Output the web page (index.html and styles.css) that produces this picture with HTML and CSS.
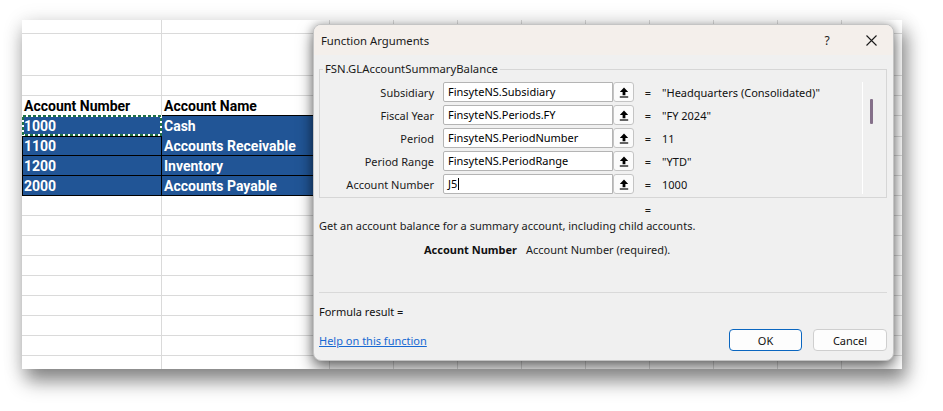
FILE: index.html
```html
<!DOCTYPE html>
<html>
<head>
<meta charset="utf-8">
<link rel="stylesheet" href="styles.css">
</head>
<body>
<div class="stage">
  <div class="sheet">
    <div class="grid">
      <div class="row r-top"><div class="cell a"></div><div class="cell b"></div><div class="cell rest"></div></div>
      <div class="row r-tall"><div class="cell a"></div><div class="cell b"></div><div class="cell rest"></div></div>
      <div class="row"><div class="cell a"></div><div class="cell b"></div><div class="cell rest"></div></div>
      <div class="row head"><div class="cell a">Account Number</div><div class="cell b">Account Name</div><div class="cell rest"></div></div>
      <div class="row data"><div class="cell a ants">1000<svg class="ants-svg" viewBox="0 0 140 21" preserveAspectRatio="none"><rect x="1" y="1" width="138" height="19" fill="none" stroke="#ffffff" stroke-width="2"/><rect x="1" y="1" width="138" height="19" fill="none" stroke="#1e7145" stroke-width="2" stroke-dasharray="3 2"/></svg></div><div class="cell b">Cash</div><div class="cell rest"></div></div>
      <div class="row data"><div class="cell a">1100</div><div class="cell b">Accounts Receivable</div><div class="cell rest"></div></div>
      <div class="row data"><div class="cell a">1200</div><div class="cell b">Inventory</div><div class="cell rest"></div></div>
      <div class="row data"><div class="cell a">2000</div><div class="cell b">Accounts Payable</div><div class="cell rest"></div></div>
      <div class="row"><div class="cell a"></div><div class="cell b"></div><div class="cell rest"></div></div>
      <div class="row"><div class="cell a"></div><div class="cell b"></div><div class="cell rest"></div></div>
      <div class="row"><div class="cell a"></div><div class="cell b"></div><div class="cell rest"></div></div>
      <div class="row"><div class="cell a"></div><div class="cell b"></div><div class="cell rest"></div></div>
      <div class="row"><div class="cell a"></div><div class="cell b"></div><div class="cell rest"></div></div>
      <div class="row"><div class="cell a"></div><div class="cell b"></div><div class="cell rest"></div></div>
      <div class="row"><div class="cell a"></div><div class="cell b"></div><div class="cell rest"></div></div>
      <div class="row"><div class="cell a"></div><div class="cell b"></div><div class="cell rest"></div></div>
      <div class="row"><div class="cell a"></div><div class="cell b"></div><div class="cell rest"></div></div>
    </div>

    <div class="dialog">
      <div class="titlebar">
        <span class="title">Function Arguments</span>
        <span class="help">?</span>
        <span class="close"><svg width="11" height="11" viewBox="0 0 11 11"><path d="M0.5 0.5 L10.5 10.5 M10.5 0.5 L0.5 10.5" stroke="#1a1a1a" stroke-width="1.1" fill="none"/></svg></span>
      </div>
      <div class="body">
        <fieldset class="group">
          <legend>FSN.GLAccountSummaryBalance</legend>
          <div class="scrollarea">
            <div class="args">
              <div class="arg"><span class="lbl">Subsidiary</span><span class="inp">FinsyteNS.Subsidiary</span><span class="pick"><svg width="10" height="11" viewBox="0 0 10 11"><path d="M5 0.5 L9.2 5 H6.4 V8.3 H3.6 V5 H0.8 Z" fill="#000"/><rect x="0.8" y="9.4" width="8.4" height="1.2" fill="#000"/></svg></span><span class="eq">=</span><span class="val">"Headquarters (Consolidated)"</span></div>
              <div class="arg"><span class="lbl">Fiscal Year</span><span class="inp">FinsyteNS.Periods.FY</span><span class="pick"><svg width="10" height="11" viewBox="0 0 10 11"><path d="M5 0.5 L9.2 5 H6.4 V8.3 H3.6 V5 H0.8 Z" fill="#000"/><rect x="0.8" y="9.4" width="8.4" height="1.2" fill="#000"/></svg></span><span class="eq">=</span><span class="val">"FY 2024"</span></div>
              <div class="arg"><span class="lbl">Period</span><span class="inp">FinsyteNS.PeriodNumber</span><span class="pick"><svg width="10" height="11" viewBox="0 0 10 11"><path d="M5 0.5 L9.2 5 H6.4 V8.3 H3.6 V5 H0.8 Z" fill="#000"/><rect x="0.8" y="9.4" width="8.4" height="1.2" fill="#000"/></svg></span><span class="eq">=</span><span class="val">11</span></div>
              <div class="arg"><span class="lbl">Period Range</span><span class="inp">FinsyteNS.PeriodRange</span><span class="pick"><svg width="10" height="11" viewBox="0 0 10 11"><path d="M5 0.5 L9.2 5 H6.4 V8.3 H3.6 V5 H0.8 Z" fill="#000"/><rect x="0.8" y="9.4" width="8.4" height="1.2" fill="#000"/></svg></span><span class="eq">=</span><span class="val">"YTD"</span></div>
              <div class="arg"><span class="lbl">Account Number</span><span class="inp">J5<span class="caret"></span></span><span class="pick"><svg width="10" height="11" viewBox="0 0 10 11"><path d="M5 0.5 L9.2 5 H6.4 V8.3 H3.6 V5 H0.8 Z" fill="#000"/><rect x="0.8" y="9.4" width="8.4" height="1.2" fill="#000"/></svg></span><span class="eq">=</span><span class="val">1000</span></div>
            </div>
            <div class="vline"></div>
            <div class="track"><div class="thumb"></div></div>
          </div>
        </fieldset>
        <div class="result-eq"><span class="eq">=</span></div>
        <div class="desc">Get an account balance for a summary account, including child accounts.</div>
        <div class="param"><span class="pname">Account Number</span><span class="pdesc">Account Number (required).</span></div>
        <div class="sep"></div>
        <div class="formula">Formula result =</div>
        <div class="footer">
          <a class="link" href="#">Help on this function</a>
          <span class="btn ok">OK</span>
          <span class="btn cancel">Cancel</span>
        </div>
      </div>
    </div>
  </div>
</div>
</body>
</html>
```
FILE: styles.css
```css
html, body {
  margin: 0;
  padding: 0;
  background: #ffffff;
}

.stage {
  padding: 20px 0 40px 22px;
}

.sheet {
  position: relative;
  width: 880px;
  height: 349px;
  overflow: hidden;
  background: #ffffff;
  box-shadow: 4px 12px 18px rgba(0, 0, 0, 0.45), 0 2px 20px rgba(0, 0, 0, 0.12);
}

.grid {
  display: flex;
  flex-direction: column;
  font-family: Roboto, "Liberation Sans", sans-serif;
  font-size: 14px;
  font-weight: 700;
  color: #000;
}

.row {
  display: grid;
  grid-template-columns: 140px 168px 1fr;
  height: 20px;
  flex: none;
}

.row.r-top { height: 14px; }
.row.r-tall { height: 42px; }

.cell {
  box-sizing: border-box;
  border-bottom: 1px solid #dadada;
  line-height: 20px;
  padding-left: 2px;
  white-space: nowrap;
  overflow: hidden;
}

.cell.a { border-right: 1px solid #dadada; }
.cell.b { border-right: 1px solid #dadada; }

.row.r-top .cell, .row.r-tall .cell { line-height: normal; }

.cell.rest {
  padding: 0;
  background-image: repeating-linear-gradient(to right, transparent 0, transparent 63px, #dadada 63px, #dadada 64px);
}

.row.head .cell.a,
.row.head .cell.b {
  border-bottom-color: #000;
  line-height: 19px;
  padding-top: 1px;
}

.row.data .cell.a,
.row.data .cell.b {
  background: #215596;
  color: #ffffff;
  border-bottom: 1px solid #000;
  line-height: 19px;
  padding-top: 1px;
}

.row.data .cell.a {
  border-left: 1px solid #000;
  border-right: 1px solid #000;
  padding-left: 1px;
}

.cell.ants {
  position: relative;
  overflow: visible;
}

.ants-svg {
  position: absolute;
  left: -1px;
  top: -1px;
  width: 140px;
  height: 21px;
}

/* Dialog */
.dialog {
  position: absolute;
  left: 291px;
  top: 4px;
  width: 581px;
  height: 337px;
  box-sizing: border-box;
  border: 1px solid #c4c4c4;
  border-radius: 8px;
  background: #f0f0f0;
  box-shadow: 0 8px 16px rgba(0, 0, 0, 0.5), 0 0 10px rgba(0, 0, 0, 0.28);
  overflow: hidden;
  display: flex;
  flex-direction: column;
  font-family: "Noto Sans", "Open Sans", sans-serif;
  font-size: 11px;
  color: #111111;
}

.titlebar {
  height: 30px;
  flex: none;
  background: #f4efeb;
  display: flex;
  align-items: center;
  padding-left: 7px;
}

.title {
  font-size: 11.3px;
  color: #1a1a1a;
}

.help {
  margin-left: auto;
  width: 20px;
  text-align: center;
  font-size: 12px;
  color: #1a1a1a;
}

.close {
  width: 44px;
  margin-left: 12px;
  display: flex;
  justify-content: center;
  align-items: center;
}

.body {
  padding: 6px 6px 0 5px;
  display: flex;
  flex-direction: column;
}

.group {
  margin: 0;
  width: 568px;
  box-sizing: border-box;
  border: 1px solid #d6d6d6;
  padding: 5px 0 3px 0;
  min-width: 0;
}

.group legend {
  margin-left: 3px;
  padding: 0 2px;
  line-height: 16px;
  font-size: 11.3px;
  color: #1a1a1a;
}

.scrollarea {
  display: flex;
  align-items: stretch;
}

.args {
  width: 542px;
  display: flex;
  flex-direction: column;
  gap: 3px;
}

.arg {
  display: flex;
  align-items: center;
  height: 20px;
}

.lbl {
  width: 114px;
  text-align: right;
  margin-right: 9px;
  color: #1a1a1a;
  flex: none;
}

.inp {
  width: 170px;
  height: 20px;
  box-sizing: border-box;
  border: 1px solid #b4b4b4;
  border-radius: 2px 0 0 2px;
  background: #ffffff;
  padding-left: 4px;
  line-height: 18px;
  color: #000;
  flex: none;
  display: flex;
  align-items: center;
}

.caret {
  display: inline-block;
  width: 1px;
  height: 12px;
  background: #000;
  margin-left: 1px;
}

.pick {
  width: 21px;
  height: 20px;
  box-sizing: border-box;
  border: 1px solid #c4c4c4;
  border-radius: 3px;
  background: #fbfbfb;
  display: flex;
  align-items: center;
  justify-content: center;
  flex: none;
}

.eq {
  display: inline-block;
  width: 12px;
  text-align: center;
  margin-left: 8px;
  margin-right: 8px;
  color: #1a1a1a;
}

.val {
  color: #111;
  white-space: nowrap;
}

.vline {
  width: 1px;
  background: #ffffff;
  flex: none;
}

.track {
  padding-left: 7px;
  flex: none;
}

.thumb {
  width: 3px;
  height: 25px;
  margin-top: 17px;
  background: #85708a;
  border-radius: 1px;
}

.result-eq {
  height: 16px;
  line-height: 16px;
  margin-top: 4px;
  padding-left: 323px;
}

.result-eq .eq {
  margin: 0;
}

.desc {
  height: 16px;
  line-height: 16px;
  color: #1a1a1a;
}

.param {
  margin-top: 8px;
  height: 16px;
  line-height: 16px;
  display: flex;
}

.pname {
  width: 198px;
  text-align: right;
  font-weight: 700;
  margin-right: 9px;
}

.pdesc {
  color: #1a1a1a;
}

.sep {
  margin-top: 34px;
  width: 568px;
  height: 1px;
  background: #d9d9d9;
}

.formula {
  margin-top: 11px;
  height: 16px;
  line-height: 16px;
  color: #111;
}

.footer {
  margin-top: 9px;
  display: flex;
  align-items: center;
  width: 568px;
}

.link {
  color: #1768d2;
  text-decoration: underline;
  margin-right: auto;
}

.btn {
  height: 22px;
  box-sizing: border-box;
  border-radius: 4px;
  background: #fdfdfd;
  display: flex;
  align-items: center;
  justify-content: center;
  color: #111;
}

.btn.ok {
  width: 73px;
  border: 1px solid #0a66c0;
}

.btn.cancel {
  width: 74px;
  margin-left: 11px;
  border: 1px solid #cfcfcf;
}
```
